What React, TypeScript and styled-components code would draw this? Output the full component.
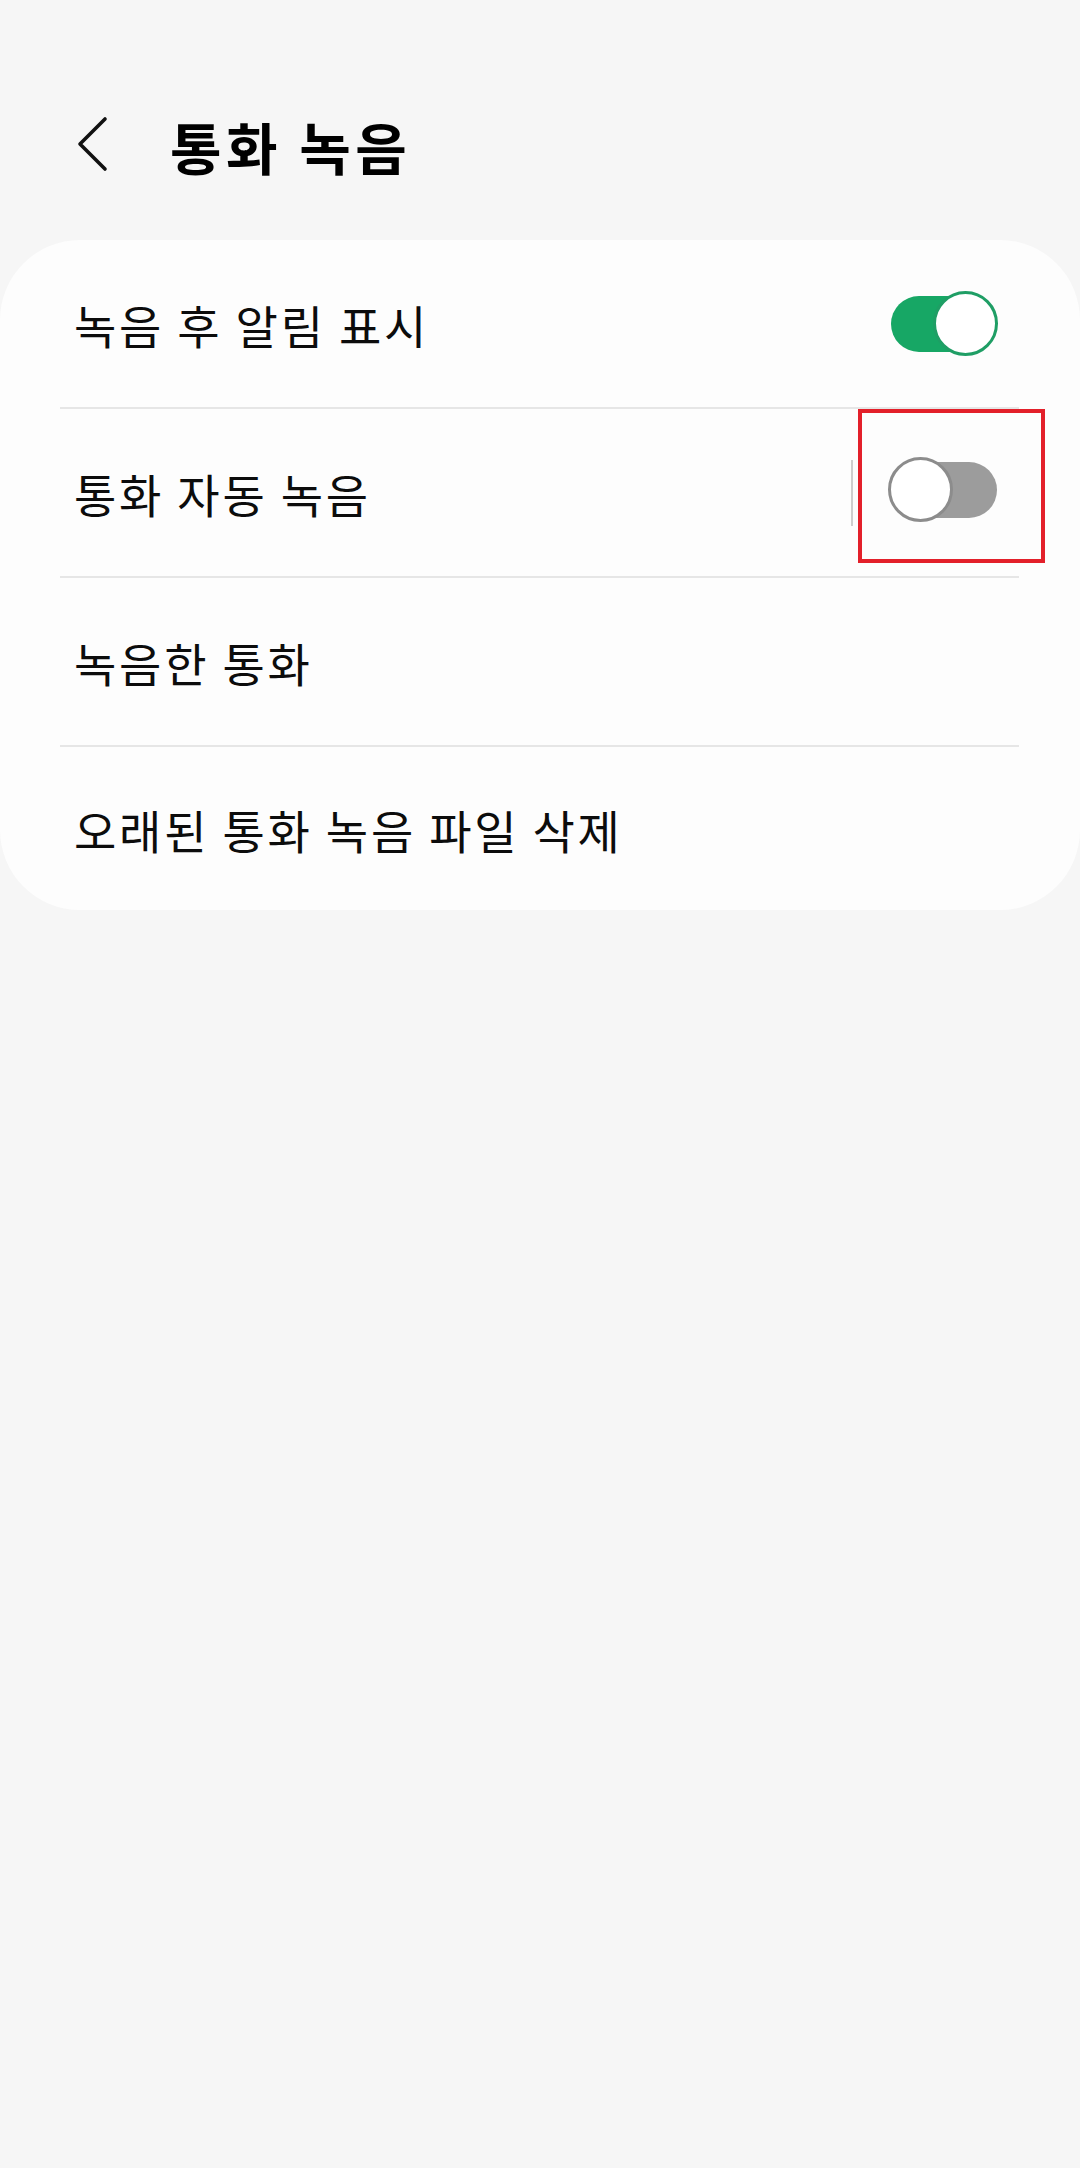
import React, { useState } from "react";
import styled, { createGlobalStyle } from "styled-components";

const GlobalStyle = createGlobalStyle`
  html, body {
    margin: 0;
    padding: 0;
    background: #f6f6f6;
  }
  body {
    font-family: "Noto Sans CJK KR", "Noto Sans", sans-serif;
    color: #0c0c0c;
  }
`;

const Page = styled.div`
  min-height: 2168px;
  background: #f6f6f6;
`;

const Header = styled.header`
  height: 240px;
  box-sizing: border-box;
  padding: 50px 0 0 76px;
  display: flex;
  align-items: center;
  gap: 60px;
`;

const BackButton = styled.button`
  border: none;
  background: none;
  padding: 0;
  width: 34px;
  height: 58px;
  display: flex;
  cursor: pointer;
`;

const Title = styled.h1`
  margin: 0;
  font-size: 56px;
  font-weight: 700;
  letter-spacing: 4.5px;
  color: #000;
`;

const Card = styled.section`
  background: #fdfdfd;
  border-radius: 80px;
  padding: 0 61px 0 60px;
  display: flex;
  flex-direction: column;
`;

const Row = styled.div<{ $last?: boolean }>`
  height: ${(p) => (p.$last ? 163 : 169)}px;
  box-sizing: border-box;
  border-bottom: ${(p) => (p.$last ? "none" : "2px solid #e6e6e6")};
  display: flex;
  align-items: center;
  padding: 0 21px 0 14px;
`;

const Label = styled.span`
  flex: 1;
  font-size: 46px;
  font-weight: 400;
  letter-spacing: 2.8px;
  color: #0c0c0c;
`;

const Separator = styled.span`
  width: 2px;
  height: 66px;
  background: #cdcdcd;
  margin-right: 35px;
`;

const SwitchWrap = styled.div`
  position: relative;
`;

const SwitchBox = styled.button`
  position: relative;
  width: 110px;
  height: 66px;
  border: none;
  background: none;
  padding: 0;
  cursor: pointer;
`;

const Track = styled.span<{ $on: boolean }>`
  position: absolute;
  left: 3px;
  right: 1px;
  top: 5px;
  height: 56px;
  border-radius: 28px;
  background: ${(p) => (p.$on ? "#17a765" : "#9c9c9c")};
`;

const Thumb = styled.span<{ $on: boolean }>`
  position: absolute;
  top: 0;
  left: ${(p) => (p.$on ? "45px" : "0")};
  width: 65px;
  height: 65px;
  box-sizing: border-box;
  border-radius: 50%;
  background: #ffffff;
  border: 3px solid ${(p) => (p.$on ? "#1f9e65" : "#8c8c8c")};
`;

const Highlight = styled.span`
  position: absolute;
  left: -30px;
  top: -48px;
  width: 187px;
  height: 154px;
  box-sizing: border-box;
  border: 4px solid #e3202a;
  pointer-events: none;
`;

const Toggle = ({
  on,
  onChange,
}: {
  on: boolean;
  onChange: () => void;
}) => (
  <SwitchBox onClick={onChange} aria-pressed={on}>
    <Track $on={on} />
    <Thumb $on={on} />
  </SwitchBox>
);

const App = () => {
  const [notify, setNotify] = useState(true);
  const [autoRecord, setAutoRecord] = useState(false);

  return (
    <Page>
      <GlobalStyle />
      <Header>
        <BackButton aria-label="back">
          <svg width="34" height="58" viewBox="0 0 34 58" fill="none">
            <path
              d="M29 3 L4 28 L29 53"
              stroke="#111"
              strokeWidth="3.6"
              strokeLinecap="round"
              strokeLinejoin="round"
            />
          </svg>
        </BackButton>
        <Title>통화 녹음</Title>
      </Header>
      <Card>
        <Row>
          <Label>녹음 후 알림 표시</Label>
          <Toggle on={notify} onChange={() => setNotify(!notify)} />
        </Row>
        <Row>
          <Label>통화 자동 녹음</Label>
          <Separator />
          <SwitchWrap>
            <Toggle on={autoRecord} onChange={() => setAutoRecord(!autoRecord)} />
            <Highlight />
          </SwitchWrap>
        </Row>
        <Row>
          <Label>녹음한 통화</Label>
        </Row>
        <Row $last>
          <Label>오래된 통화 녹음 파일 삭제</Label>
        </Row>
      </Card>
    </Page>
  );
};

export default App;
